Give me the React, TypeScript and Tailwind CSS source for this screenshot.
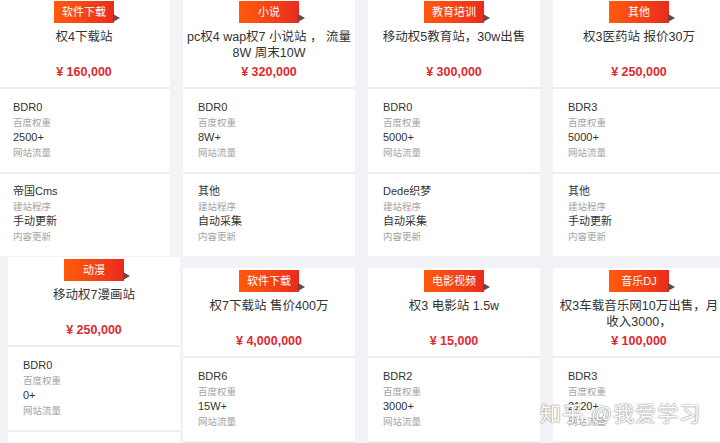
import React from 'react';

type Site = {
  tag: string;
  title: string;
  price: string;
  bdr: string;
  traffic: string;
  cms?: string;
  update?: string;
};

const topRow: Site[] = [
  { tag: '软件下载', title: '权4下载站', price: '¥ 160,000', bdr: 'BDR0', traffic: '2500+', cms: '帝国Cms', update: '手动更新' },
  { tag: '小说', title: 'pc权4 wap权7 小说站 ， 流量\n8W 周末10W', price: '¥ 320,000', bdr: 'BDR0', traffic: '8W+', cms: '其他', update: '自动采集' },
  { tag: '教育培训', title: '移动权5教育站，30w出售', price: '¥ 300,000', bdr: 'BDR0', traffic: '5000+', cms: 'Dede织梦', update: '自动采集' },
  { tag: '其他', title: '权3医药站 报价30万', price: '¥ 250,000', bdr: 'BDR3', traffic: '5000+', cms: '其他', update: '手动更新' },
];

const bottomRow: Site[] = [
  { tag: '动漫', title: '移动权7漫画站', price: '¥ 250,000', bdr: 'BDR0', traffic: '0+' },
  { tag: '软件下载', title: '权7下载站 售价400万', price: '¥ 4,000,000', bdr: 'BDR6', traffic: '15W+' },
  { tag: '电影视频', title: '权3 电影站 1.5w', price: '¥ 15,000', bdr: 'BDR2', traffic: '3000+' },
  { tag: '音乐DJ', title: '权3车载音乐网10万出售，月\n收入3000，', price: '¥ 100,000', bdr: 'BDR3', traffic: '2120+' },
];

function Tag({ label }: { label: string }) {
  return (
    <div className="relative mx-auto h-[22px] w-[60px]">
      <div className="flex h-full w-full items-center justify-center bg-gradient-to-r from-[#ff5a0a] to-[#ea2a1c] text-[11px] text-white">
        {label}
      </div>
      <div className="absolute bottom-[1px] right-[-6px] h-0 w-0 border-y-[4px] border-l-[7px] border-y-transparent border-l-[#6b4a40]" />
    </div>
  );
}

function Info({ value, label }: { value: string; label: string }) {
  return (
    <>
      <p className="text-[11px] text-[#333]">{value}</p>
      <p className="text-[9.5px] text-[#a3a3a3]">{label}</p>
    </>
  );
}

function Card({ site, className = '' }: { site: Site; className?: string }) {
  return (
    <div className={`w-[172px] shrink-0 bg-white ${className}`}>
      <div className="flex h-[88px] flex-col pt-[2px]">
        <Tag label={site.tag} />
        <div className="mt-[6px] h-[32px] whitespace-pre text-center text-[12.5px] leading-[16px] text-[#333]">
          {site.title}
        </div>
        <p className="mt-[3px] text-center text-[12.5px] font-bold leading-[16px] text-[#e0282e]">
          {site.price}
        </p>
      </div>
      <div className="h-[2px] bg-[#ededf0]" />
      <div className="h-[83px] pl-[15px] pt-[11px] leading-[15px]">
        <Info value={site.bdr} label="百度权重" />
        <Info value={site.traffic} label="网站流量" />
      </div>
      <div className="h-[2px] bg-[#ededf0]" />
      <div className="h-[82px] pl-[15px] pt-[10px] leading-[15px]">
        {site.cms && <Info value={site.cms} label="建站程序" />}
        {site.update && <Info value={site.update} label="内容更新" />}
      </div>
    </div>
  );
}

export default function App() {
  return (
    <div className="relative h-[443px] w-[720px] overflow-hidden bg-[#f2f3f6] font-['Liberation_Sans','Noto_Sans_CJK_SC',sans-serif]">
      <div className="ml-[-2px] mt-[-1px] flex gap-[13px]">
        {topRow.map((s) => (
          <Card key={s.title} site={s} />
        ))}
      </div>

      <div className="mt-[1px] flex items-start">
        <Card site={bottomRow[0]} className="ml-[8px]" />
        <div className="ml-[3px] mt-[11px] flex gap-[13px]">
          {bottomRow.slice(1).map((s) => (
            <Card key={s.title} site={s} />
          ))}
        </div>
      </div>

      <div className="absolute left-[540px] top-[398px] text-[21px] tracking-[1px] text-white [text-shadow:0_0_1px_#777,0_0_2px_#999]">
        知乎 @我爱学习
      </div>
    </div>
  );
}
